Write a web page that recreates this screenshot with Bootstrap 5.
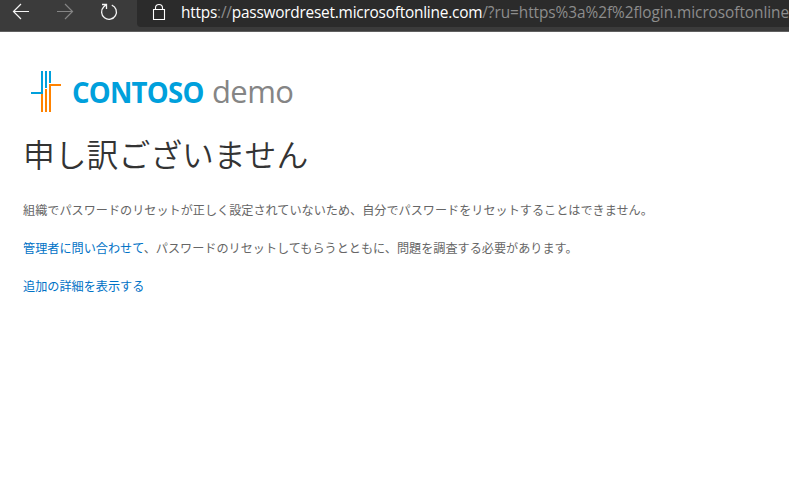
<!DOCTYPE html>
<html lang="ja">
<head>
<meta charset="utf-8">
<meta name="viewport" content="width=device-width, initial-scale=1">
<title>申し訳ございません</title>
<link href="https://cdn.jsdelivr.net/npm/bootstrap@5.3.0/dist/css/bootstrap.min.css" rel="stylesheet">
<style>
body{background:#fff;color:#666;font-family:"Noto Sans CJK JP",sans-serif;font-size:12.13px;line-height:18px;overflow:hidden}
.browser-bar{height:32px;background:#3b3b3b;border-bottom:1px solid #606060}
.browser-bar svg{display:block;flex:none}
.tools{width:137px;height:27px;padding-left:12px}
.address{height:27px;background:#2b2b2b;border-bottom-left-radius:4px;padding-left:14px;font-family:"Open Sans","Noto Sans",sans-serif;font-size:15.4px;line-height:26px;color:#8d8d8d}
.address b{font-weight:400;color:#fff}
.url{margin-left:14px}
.host{letter-spacing:-.22px}
.query{letter-spacing:-.06px}
.page{padding:39px 23px 0}
.logo{height:41px;padding-left:8px}
.brand-name{font:700 29px/42px "Open Sans",sans-serif;color:#00a0dc;margin-left:11px;width:140px;letter-spacing:-.8px}
.brand-name span{display:inline-block;transform:scaleX(.95);transform-origin:left}
.brand-sub{font:400 31px/41px "Open Sans",sans-serif;color:#858585;letter-spacing:-.6px}
h1{font-size:31.8px;line-height:44px;font-weight:350;color:#333;margin:19px 0 26px}
.page p{margin:0 0 20px}
.page a{color:#0072c6}
</style>
</head>
<body>
<header class="browser-bar d-flex overflow-hidden">
  <div class="tools d-flex align-items-start flex-shrink-0">
    <svg width="125" height="27" viewBox="0 0 125 27" fill="none" stroke-width="1.2">
      <path d="M9 4 1.5 11.5 9 19M1.5 11.5H17" stroke="#f5f5f5"/>
      <path d="M53 4 60.5 11.5 53 19M60.5 11.5H45" stroke="#858585"/>
      <path d="M99.8 5.1A7.4 7.4 0 1 1 91.8 6.7L94.3 4.7M90 4.5H94.5V9" stroke="#f5f5f5" stroke-width="1.3"/>
    </svg>
  </div>
  <div class="address d-flex flex-grow-1 text-nowrap">
    <svg width="16" height="27" viewBox="0 0 16 27" fill="none" stroke="#fff" stroke-width="1.1"><path d="M2.5 9.5h11v10h-11zM4.5 9.5V8a3.5 3.5 0 0 1 7 0v1.5"/></svg>
    <div class="url"><span class="host"><b>https</b>://<b>passwordreset.microsoftonline.com</b></span><span class="query">/?ru=https%3a%2f%2flogin.microsoftonline</span></div>
  </div>
</header>
<main class="page">
  <div class="logo d-flex align-items-start text-nowrap">
    <svg class="flex-shrink-0" width="30" height="41" viewBox="0 0 30 41" fill="none" stroke-width="2">
      <path d="M11 0V22H0M15 0V17M19 0V12" stroke="#00a0dc"/>
      <path d="M30 14H19V41M15 18V41M11 23V41" stroke="#ff8200"/>
    </svg>
    <div class="brand-name"><span>CONTOSO</span></div>
    <div class="brand-sub">demo</div>
  </div>
  <h1>申し訳ございません</h1>
  <p>組織でパスワードのリセットが正しく設定されていないため、自分でパスワードをリセットすることはできません。</p>
  <p><a href="#" class="text-decoration-none">管理者に問い合わせて</a>、パスワードのリセットしてもらうとともに、問題を調査する必要があります。</p>
  <p><a href="#" class="text-decoration-none">追加の詳細を表示する</a></p>
</main>
<script src="https://cdn.jsdelivr.net/npm/bootstrap@5.3.0/dist/js/bootstrap.bundle.min.js"></script>
</body>
</html>
